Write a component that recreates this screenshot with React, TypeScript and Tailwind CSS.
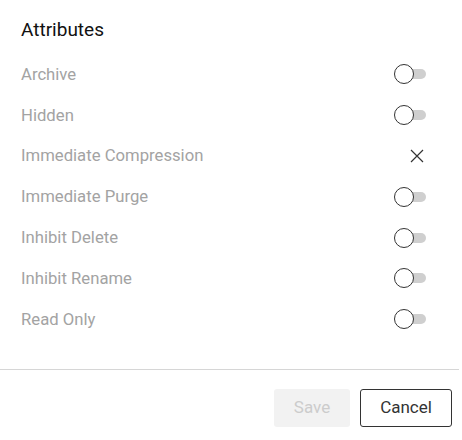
import React from "react";

const rows: { label: string; kind: "toggle" | "x" }[] = [
  { label: "Archive", kind: "toggle" },
  { label: "Hidden", kind: "toggle" },
  { label: "Immediate Compression", kind: "x" },
  { label: "Immediate Purge", kind: "toggle" },
  { label: "Inhibit Delete", kind: "toggle" },
  { label: "Inhibit Rename", kind: "toggle" },
  { label: "Read Only", kind: "toggle" },
];

function Toggle() {
  return (
    <div className="relative w-[32px] h-[20px] flex items-center">
      <div className="absolute left-[16px] w-[16px] h-[10px] rounded-r-full bg-[#cfcfcf]" />
      <div className="absolute left-0 w-[20px] h-[20px] rounded-full bg-white border border-[#333]" />
    </div>
  );
}

function XMark() {
  return (
    <div className="w-[32px] h-[20px] flex items-center justify-end pr-[2px]">
      <svg width="14" height="14" viewBox="0 0 14 14" fill="none" stroke="#333" strokeWidth="1.2">
        <path d="M1 1 L13 13 M13 1 L1 13" />
      </svg>
    </div>
  );
}

export default function App() {
  return (
    <div className="w-[462px] h-[440px] bg-white" style={{ fontFamily: "Roboto, sans-serif" }}>
      <div className="pl-[21px] pr-[36px] pt-[20px]">
        <h2 className="text-[19px] leading-[20px] font-normal text-[#111]">Attributes</h2>
        <div className="mt-[14px]">
          {rows.map(r => (
            <div key={r.label} className="h-[40.8px] flex items-center justify-between">
              <span className="text-[16.7px] text-[#a3a3a3]">{r.label}</span>
              {r.kind === "toggle" ? <Toggle /> : <XMark />}
            </div>
          ))}
        </div>
      </div>
      <div className="mt-[29px] w-[459px] border-t border-[#d6d6d6]" />
      <div className="flex justify-end gap-[10px] pr-[10px] pt-[19px]">
        <button className="w-[76px] h-[38px] rounded-[3px] bg-[#f2f2f2] text-[17px] text-[#cccccc]">Save</button>
        <button className="w-[92px] h-[38px] rounded-[3px] border border-[#333] bg-white text-[17px] text-[#333]">Cancel</button>
      </div>
    </div>
  );
}
